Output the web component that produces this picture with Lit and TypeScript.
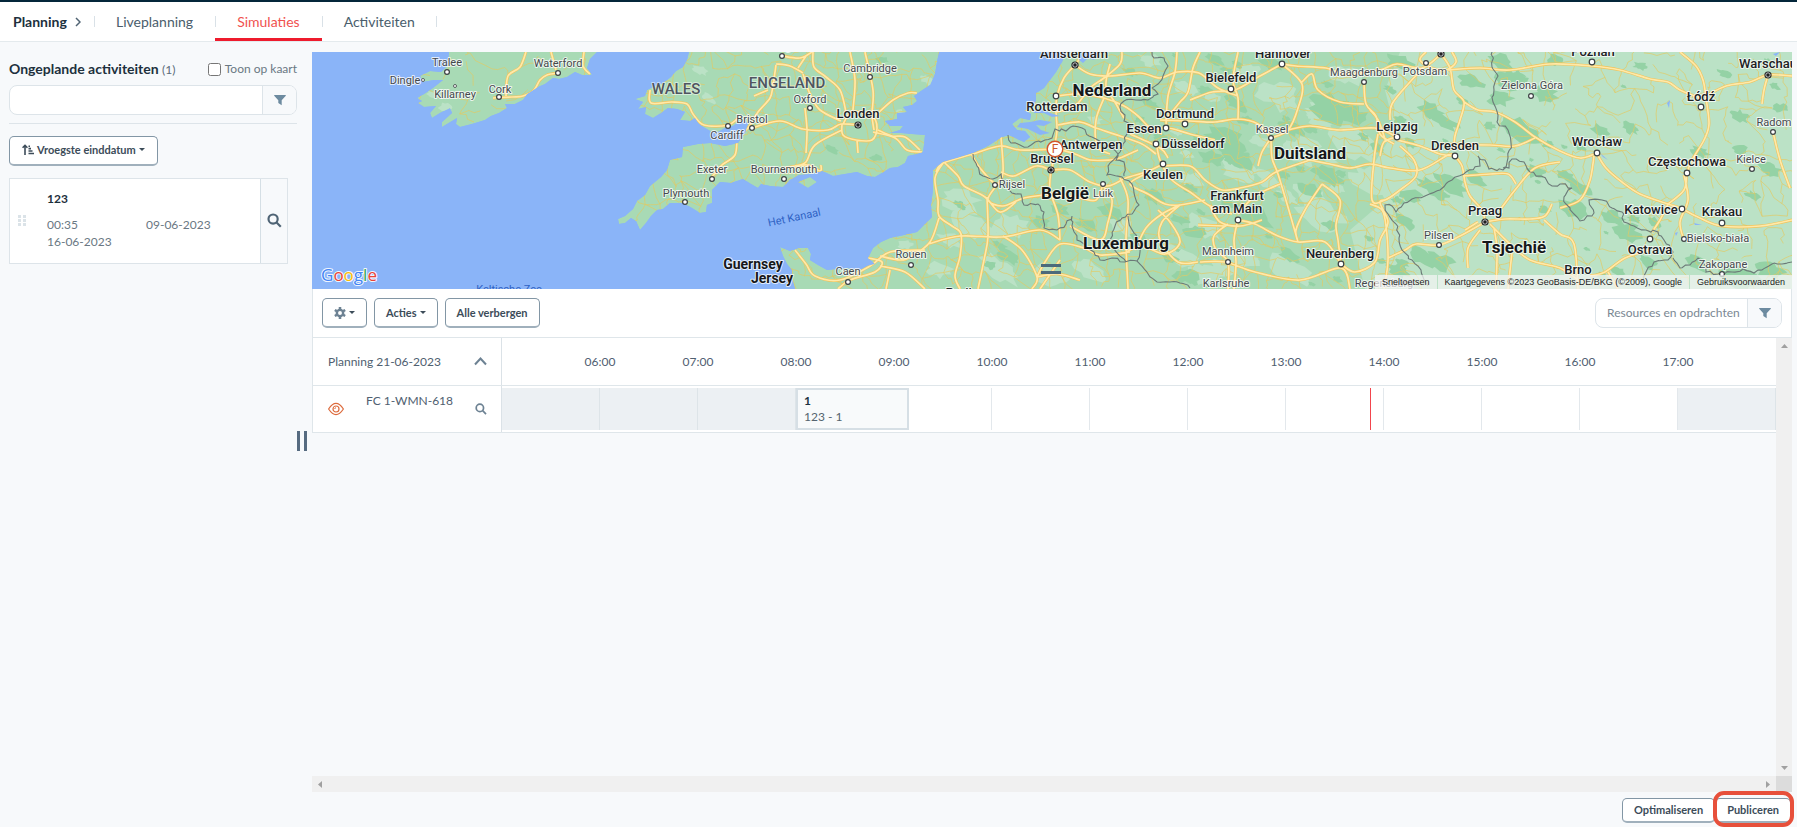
import { LitElement, html, css, svg } from "lit";
import { customElement, property } from "lit/decorators.js";

type Pt = [number, number];

/* ---------- map data ---------- */

const LAND = [
  "M449 52 448 65 441 72 430 71 420 76 423 82 434 80 443 80 433 88 424 94 417 98 422 101 418 103 424 107 436 106 430 113 432 118 440 113 450 108 452 113 442 122 442 127 452 121 457 118 456 124 460 127 472 124 485 120 491 116 499 113 507 108 505 104 515 104 523 100 527 94 538 87 545 84 553 78 559 79 567 77 575 72 582 75 592 75 587 68 590 59 597 52Z",
  "M689 52 687 60 683 67 676 71 671 77 663 83 653 87 647 90 645 96 635 99 643 102 638 109 646 107 645 114 653 118 661 113 668 108 677 109 685 112 680 120 690 121 695 118 699 124 705 128 712 132 718 132 725 128 733 126 742 120 748 123 746 131 742 137 738 143 725 146 710 143 698 144 683 147 682 157 670 160 667 170 661 177 650 186 645 195 637 201 633 209 625 216 618 219 619 224 625 223 631 218 636 221 640 230 646 223 651 216 657 210 663 209 670 203 683 203 692 208 700 213 706 212 707 205 712 203 712 190 720 182 731 183 743 179 751 184 758 188 761 184 770 186 783 187 790 180 799 175 812 174 822 171 833 176 845 174 857 172 867 176 875 177 882 173 890 168 898 167 905 163 908 156 917 154 923 152 924 145 925 135 912 134 901 133 890 133 900 130 903 126 890 126 885 121 897 119 897 113 907 112 903 107 912 105 917 101 914 96 921 91 930 85 935 74 937 62 939 52Z",
  "M798 182 810 177 817 182 808 188Z",
  "M780 247 790 251 799 248 808 248 811 254 810 260 818 265 827 270 837 269 847 268 860 270 867 266 875 264 868 258 873 248 881 242 890 238 904 235 917 232 925 224 932 217 931 205 933 190 933 170 943 162 957 158 973 153 988 146 1002 137 1009 135 1015 138 1024 142 1030 137 1025 131 1017 130 1012 124 1020 118 1030 120 1031 114 1024 110 1032 108 1036 101 1036 93 1044 88 1050 80 1056 72 1062 62 1066 52 1792 52 1792 289 795 289 792 278 792 270 787 264 783 256Z",
];

const WATER = [
  "M1081 52 1079 60 1083 63 1088 58 1094 60 1098 52Z",
  "M1017 127 1028 129 1040 135 1050 133 1041 130 1036 125 1044 126 1052 122 1040 120 1030 122 1020 123Z",
  "M1034 113 1044 113 1052 117 1060 116 1050 113 1042 109 1034 110Z",
  "M1600 153 1608 160 1603 157Z", "M1667 103 1670 100 1669 108Z", "M1773 54 1780 52 1776 56Z",
  "M1694 223 1702 225 1695 225Z", "M1675 233 1678 232 1676 236Z",
];

/* national frontiers */
const BORDERS: Pt[][] = [
  [[1152,52],[1154,58],[1164,58],[1168,66],[1163,76],[1158,84],[1152,88],[1158,94],[1148,100],[1136,100],[1124,101],[1120,107],[1125,115],[1124,121],[1130,124],[1127,134],[1123,144],[1118,154],[1110,163],[1107,175],[1122,177],[1132,184],[1134,193],[1139,205],[1132,214],[1122,218],[1115,226],[1110,240],[1118,254],[1126,262]],
  [[1008,135],[1011,143],[1020,145],[1028,147],[1035,142],[1045,140],[1052,138],[1055,129],[1066,131],[1073,126],[1082,128],[1089,136],[1096,139],[1102,146],[1112,148],[1118,154],[1116,160],[1124,162],[1124,176]],
  [[973,154],[977,166],[983,176],[993,179],[1001,174],[1005,182],[1012,193],[1021,194],[1024,205],[1038,204],[1044,212],[1044,228],[1057,230],[1066,224],[1072,216],[1072,226],[1077,240],[1084,244],[1094,252],[1100,260],[1112,258],[1125,262],[1137,261],[1145,270],[1157,282],[1170,282],[1180,283],[1190,288]],
  [[1128,216],[1131,228],[1138,240],[1140,252],[1137,261]],
  [[1492,52],[1492,67],[1498,76],[1494,90],[1493,102],[1498,115],[1497,122],[1508,130],[1511,143],[1508,158],[1503,170],[1489,169],[1485,160],[1478,156],[1480,166],[1466,172],[1452,180],[1440,190],[1425,196],[1412,199],[1404,203],[1396,212],[1392,206],[1385,205],[1388,214],[1396,224],[1399,238],[1402,250],[1412,260],[1421,270],[1428,286]],
  [[1503,168],[1509,168],[1512,159],[1524,162],[1530,172],[1541,176],[1552,186],[1560,184],[1572,188],[1564,197],[1566,204],[1574,214],[1580,221],[1594,213],[1589,200],[1602,200],[1612,208],[1622,212],[1624,222],[1634,226],[1646,230],[1658,232],[1664,240],[1673,252],[1668,260],[1654,262],[1646,272],[1640,282]],
  [[1673,258],[1680,268],[1690,265],[1698,258],[1704,264],[1706,272],[1718,274],[1732,272],[1743,269],[1754,273],[1762,270],[1772,264],[1782,264],[1792,262]],
];

/* motorways */
const ROADS: Pt[][] = [
  [[493,98],[512,97],[523,96],[534,90],[540,80],[547,75],[558,73]],
  [[506,96],[508,76],[520,67],[526,52]], [[551,52],[556,70]], [[584,52],[583,66],[590,74]],
  [[650,90],[651,103],[672,102],[687,104],[693,114],[704,125],[728,125],[740,116]],
  [[776,65],[773,85],[770,98],[758,112],[748,128],[738,136],[735,155],[722,165],[712,177]],
  [[752,128],[780,121],[803,129],[828,130],[841,124],[858,125]],
  [[842,124],[843,135],[856,140],[872,140],[877,128],[872,116],[852,112],[843,124]],
  [[803,74],[810,94],[820,110],[841,121]], [[813,52],[814,67],[826,77],[840,90],[846,112]],
  [[776,64],[790,66],[803,73]], [[782,56],[800,58],[812,52]], [[850,52],[855,80],[853,110]],
  [[865,52],[873,90],[872,115],[874,130]], [[876,115],[893,100],[908,93],[917,93]],
  [[842,130],[815,145],[806,162],[795,166]], [[805,108],[807,130],[806,153]],
  [[873,132],[895,138],[907,150],[922,152]], [[878,130],[892,136],[905,137],[920,150]], [[857,140],[858,153]],
  [[754,96],[768,90]], [[785,168],[807,165],[820,171],[821,165]], [[798,68],[806,56]],
  [[795,250],[806,264],[815,276],[840,280],[870,266],[890,252],[925,250]],
  [[868,258],[882,262],[875,272],[850,280],[838,289]], [[880,266],[905,272],[925,289]], [[890,270],[886,289]],
  [[936,172],[943,163],[973,154],[1000,146],[1020,150],[1055,149]],
  [[943,163],[935,178],[938,200],[939,216],[952,226],[961,234],[960,256],[955,276],[960,289]],
  [[939,218],[930,242],[912,256],[900,260],[880,256]], [[928,244],[960,236],[1002,237],[1040,230],[1060,240]],
  [[945,163],[958,176],[964,186],[985,197],[1000,212],[1016,202]],
  [[972,155],[980,168],[996,184],[1003,172],[1001,137]], [[1001,172],[1014,176],[1036,166],[1050,170]],
  [[987,197],[988,236],[984,260],[978,289]], [[996,186],[988,200],[1003,206],[1024,198],[1051,194]],
  [[1003,236],[1022,250],[1037,277],[1032,289]], [[1037,277],[1045,262],[1060,244],[1084,248],[1100,255],[1130,252]],
  [[1037,277],[1058,274],[1080,280]], [[1040,289],[1060,260]],
  [[1052,170],[1054,150],[1057,130],[1056,112],[1057,96],[1064,78],[1075,65]],
  [[1058,149],[1075,154],[1090,160],[1110,160],[1120,158],[1138,150]],
  [[1052,170],[1070,170],[1090,182],[1108,186],[1126,178],[1146,172],[1163,164]],
  [[1051,170],[1050,190],[1058,215],[1060,240]], [[1052,194],[1080,198],[1096,200],[1103,184]],
  [[1103,186],[1112,200],[1108,222],[1100,240],[1070,226]], [[1120,178],[1128,200],[1126,240],[1128,289]],
  [[1126,252],[1142,246],[1165,254],[1180,242],[1170,222],[1158,210]],
  [[1056,112],[1075,106],[1090,88],[1104,78],[1120,64],[1122,52]],
  [[1075,65],[1090,74],[1110,76],[1140,73],[1160,78],[1177,72],[1199,73],[1218,88],[1238,96]],
  [[1075,65],[1085,52]], [[1057,96],[1080,94],[1104,98],[1124,106],[1138,116],[1150,128],[1162,134]],
  [[1104,98],[1096,120],[1097,146],[1110,154]], [[1058,125],[1080,122],[1096,128],[1120,136],[1142,144],[1156,154]],
  [[1110,64],[1106,86],[1116,104],[1124,118]], [[1177,52],[1175,72],[1168,96],[1166,125]],
  [[1200,52],[1193,68],[1188,92],[1180,102],[1167,118]],
  [[1190,100],[1212,92],[1235,90],[1260,76],[1282,64]], [[1238,52],[1233,80],[1238,98],[1238,120]],
  [[1160,120],[1190,121],[1215,122],[1238,119],[1258,124],[1271,138]],
  [[1150,130],[1168,128],[1190,134],[1215,140]], [[1130,134],[1160,148],[1168,158]],
  [[1156,140],[1160,160],[1172,180],[1190,192],[1210,206],[1232,214]],
  [[1163,166],[1190,166],[1205,180],[1222,190],[1240,188],[1262,182],[1276,172],[1310,160]],
  [[1145,174],[1130,184],[1148,194],[1165,204],[1180,205],[1205,200]],
  [[1180,205],[1162,214],[1146,228],[1135,250]], [[1180,205],[1162,222],[1160,240],[1178,262],[1198,262]],
  [[1271,138],[1272,158],[1278,174],[1290,214],[1298,242]], [[1271,138],[1262,152],[1258,166]],
  [[1282,64],[1296,66],[1326,68],[1345,74],[1380,70],[1397,64],[1422,68],[1441,54]],
  [[1282,64],[1302,84],[1298,108],[1288,130],[1271,138]], [[1302,82],[1312,74],[1318,90],[1340,102],[1364,104]],
  [[1288,130],[1310,126],[1340,130],[1375,128],[1397,137]],
  [[1364,82],[1366,104],[1376,116],[1380,134],[1394,144]],
  [[1310,160],[1330,164],[1350,168],[1370,164],[1390,168],[1420,170],[1448,155],[1455,156]],
  [[1322,184],[1340,200],[1336,225],[1338,240],[1341,264]], [[1322,184],[1305,210],[1296,230],[1298,242]],
  [[1238,220],[1255,224],[1278,236],[1298,242],[1325,242],[1341,264]],
  [[1238,220],[1234,240],[1236,262],[1234,289]], [[1228,224],[1214,236],[1216,250],[1228,262],[1228,289]],
  [[1238,214],[1255,196],[1280,184]], [[1210,206],[1220,222],[1240,226],[1262,220]], [[1198,225],[1225,226]],
  [[1200,262],[1225,262],[1255,272],[1300,280],[1341,268],[1350,289]],
  [[1341,264],[1355,272],[1375,262],[1380,240],[1388,222],[1380,203],[1385,200]],
  [[1378,134],[1374,160],[1372,200],[1385,200],[1400,190],[1416,176],[1414,160],[1400,146]],
  [[1370,204],[1382,210],[1386,226],[1388,260],[1384,289]], [[1388,258],[1405,250],[1416,244],[1439,245],[1460,236],[1485,222]],
  [[1397,137],[1384,142],[1380,156]], [[1386,142],[1378,120],[1370,110]], [[1390,120],[1392,104],[1410,82],[1424,68]],
  [[1441,54],[1450,68],[1454,90],[1464,102],[1460,120],[1455,136],[1454,150]],
  [[1426,52],[1420,60],[1432,68],[1446,70],[1456,62],[1452,52]],
  [[1397,140],[1420,146],[1440,154],[1455,156]], [[1455,145],[1490,145],[1515,146],[1535,138]],
  [[1464,102],[1478,110],[1495,112],[1515,122],[1535,137],[1558,150],[1580,158],[1597,153]],
  [[1455,156],[1462,166],[1465,182],[1470,196],[1482,210],[1485,222]], [[1463,176],[1490,174],[1508,174],[1516,184]],
  [[1485,222],[1505,219],[1530,219],[1545,216],[1552,204]], [[1490,224],[1510,244],[1530,260],[1560,268],[1578,280]],
  [[1478,222],[1465,230]], [[1480,230],[1468,248],[1468,268]], [[1494,228],[1497,250],[1496,289]], [[1512,252],[1508,289]],
  [[1500,210],[1515,190],[1535,168],[1560,162]], [[1544,220],[1560,234],[1574,244],[1578,289]],
  [[1448,70],[1480,68],[1510,70],[1550,64],[1592,66],[1620,70],[1650,79],[1668,82],[1680,90],[1700,98]],
  [[1680,52],[1696,66],[1703,80],[1706,98],[1709,124],[1704,140],[1692,160],[1687,173],[1684,190],[1668,204]],
  [[1706,96],[1726,86],[1750,82],[1768,75],[1792,76]], [[1768,75],[1764,90],[1762,104]],
  [[1597,154],[1606,168],[1622,182],[1640,194],[1668,204],[1680,208],[1700,218],[1722,226],[1760,226],[1792,220]],
  [[1668,204],[1660,220],[1652,232]], [[1650,250],[1625,258],[1605,272],[1590,276]],
  [[1594,156],[1590,180],[1580,200],[1560,208]], [[1684,175],[1688,200],[1680,222],[1684,240]],
  [[1773,132],[1780,160],[1790,188]], [[1608,272],[1618,289]],
];

/* woodland */
const FORESTS: [number, number, number][] = [
  [1225,140,22],[1240,160,18],[1212,158,14],[1200,140,10],[1255,216,20],[1236,104,12],[1330,108,26],[1352,116,16],[1290,128,14],
  [1328,176,16],[1310,190,12],[1215,60,10],[1270,64,12],[1378,148,8],[1410,196,14],[1430,186,14],[1450,184,18],[1475,178,12],
  [1400,62,16],[1430,110,14],[1445,122,14],[1500,62,14],[1510,80,18],[1500,98,14],[1545,94,14],[1520,130,22],[1470,82,14],
  [1535,172,12],[1575,210,16],[1580,188,12],[1612,218,14],[1625,232,18],[1566,176,10],[1600,130,10],[1630,128,10],[1648,262,12],
  [1695,262,14],[1740,278,22],[1770,270,16],[1405,222,12],[1420,256,16],[1440,262,16],[1398,270,12],[1152,196,12],[1110,212,14],
  [1088,226,12],[1140,240,10],[1195,232,12],[1185,276,14],[1170,258,10],[990,265,8],[1010,258,12],[1000,246,8],[832,150,7],
  [876,158,7],[882,60,7],[960,205,7],[1780,108,8],[1770,170,14],[1740,150,10],[1400,120,8],[1205,90,8],[1130,72,8],[1060,210,10],
  [1725,74,8],[1640,66,8],[1555,60,10],[1740,116,10],[1700,152,10],[1290,256,12],[1330,225,9],[1210,120,7],[1140,120,6],[1040,222,10],
];

const FIELDS: [number, number, number][] = [
  [960,200,22],[975,225,24],[950,240,14],[1010,225,22],[1000,270,22],[940,270,14],[1050,275,18],[700,70,9],[708,98,8],[928,80,9],
  [445,107,7],[432,94,6],[1185,88,12],[1150,60,12],[1280,95,26],[1300,150,22],[1205,225,20],[1240,258,20],[1190,180,14],[1120,225,16],
  [905,245,9],[900,112,6],[1250,70,14],[1320,215,26],[1290,270,22],[1345,75,18],[1355,145,26],[1370,180,22],[1095,120,8],[1090,270,18],
];

type Label = [string, number, number, string, number?, number?, string?];
/* text, x, baseline, class, dot x, dot y, dot kind */
const LABELS: Label[] = [
  ["Tralee",447,66,"town",447,72],["Dingle",405,84,"town",423,80,"s"],["Killarney",455,98,"town",455,86,"s"],
  ["Cork",500,93,"town",499,97],["Waterford",558,67,"town",558,73],["WALES",676,94,"region"],["ENGELAND",787,88,"region"],
  ["Birmingham",783,50,"town",782,56],["Cambridge",870,72,"town",870,77],["Oxford",810,103,"town",810,108],
  ["Londen",858,118,"city",858,125,"c"],["Bristol",752,123,"town",752,128],["Cardiff",727,139,"town",728,126],
  ["Exeter",712,173,"town",712,179],["Bournemouth",784,173,"town",784,179],["Plymouth",686,197,"town",685,202],
  ["Guernsey",753,269,"isle"],["Jersey",772,283,"isle"],["Rouen",911,258,"town",911,265],["Caen",848,275,"town",848,282],
  ["Parijs",962,297,"city"],["Amsterdam",1074,58,"city",1075,65,"c"],["Rotterdam",1057,111,"city",1056,96],
  ["Nederland",1112,96,"land"],["Brussel",1052,163,"city",1051,170,"c"],["Antwerpen",1091,149,"city"],["België",1065,199,"land"],
  ["Luik",1103,197,"town",1103,184],["Rijsel",1012,188,"town",995,185],["Essen",1144,133,"city",1166,128],
  ["Dortmund",1185,118,"city",1185,124],["Düsseldorf",1193,148,"city",1156,144],["Keulen",1163,179,"city",1163,164],
  ["Bielefeld",1231,82,"city",1231,89],["Hannover",1283,58,"city",1282,64],["Kassel",1272,133,"town",1271,138],
  ["Duitsland",1310,159,"land"],["Maagdenburg",1364,76,"town",1364,82],["Frankfurt",1237,200,"city",1238,220],
  ["am Main",1237,213,"city"],["Luxemburg",1126,249,"land"],["Mannheim",1228,255,"town",1228,262],["Karlsruhe",1226,287,"town"],
  ["Neurenberg",1340,258,"city",1341,264],["Regensburg",1384,287,"town"],["Potsdam",1425,75,"town",1426,63],
  ["Berlijn",1441,48,"city",1441,54,"c"],["Poznań",1593,56,"city",1592,62],["Zielona Góra",1532,89,"town",1531,96],
  ["Łódź",1701,101,"city",1701,107],["Warschau",1768,68,"city",1768,75,"c"],["Radom",1774,126,"town",1773,132],
  ["Leipzig",1397,131,"city",1397,137],["Dresden",1455,150,"city",1455,156],["Wrocław",1597,146,"city",1597,153],
  ["Częstochowa",1687,166,"city",1687,173],["Kielce",1751,163,"town",1752,169],["Praag",1485,215,"city",1485,222,"c"],
  ["Pilsen",1439,239,"town",1439,245],["Tsjechië",1514,253,"land"],["Katowice",1651,214,"city",1682,209],
  ["Krakau",1722,216,"city",1722,223],["Ostrava",1650,254,"city",1650,239],["Bielsko-biała",1718,242,"town",1684,239],
  ["Zakopane",1723,268,"town",1722,274],["Brno",1578,274,"city"],
];

function seeded(seed: number) {
  let s = seed;
  return () => {
    s = (s * 1664525 + 1013904223) % 4294967296;
    return s / 4294967296;
  };
}

/* smooth curve through the given points */
function curve(p: Pt[]): string {
  let d = `M${p[0][0]} ${p[0][1]}`;
  for (let i = 0; i < p.length - 1; i++) {
    const a = p[i - 1] ?? p[i], b = p[i], c = p[i + 1], e = p[i + 2] ?? c;
    const n = (v: number) => v.toFixed(1);
    d += `C${n(b[0] + (c[0] - a[0]) / 6)} ${n(b[1] + (c[1] - a[1]) / 6)} ${n(c[0] - (e[0] - b[0]) / 6)} ${n(c[1] - (e[1] - b[1]) / 6)} ${c[0]} ${c[1]}`;
  }
  return d;
}

/* breaks every leg in short, slightly shaken steps */
function rough(p: Pt[], amount: number, seed: number): string {
  const r = seeded(seed);
  let d = `M${p[0][0]} ${p[0][1]}`;
  for (let i = 0; i < p.length - 1; i++) {
    const [x1, y1] = p[i], [x2, y2] = p[i + 1];
    const steps = Math.max(1, Math.round(Math.hypot(x2 - x1, y2 - y1) / 4));
    for (let k = 1; k <= steps; k++) {
      const j = k === steps ? 0 : amount;
      d += `L${(x1 + ((x2 - x1) * k) / steps + (r() - 0.5) * j).toFixed(1)} ${(y1 + ((y2 - y1) * k) / steps + (r() - 0.5) * j).toFixed(1)}`;
    }
  }
  return d;
}

function blobs(list: [number, number, number][], seed: number): string {
  const r = seeded(seed);
  return list
    .map(([x, y, s]) => {
      const n = 16, tilt = r() * 3;
      let d = "";
      for (let i = 0; i < n; i++) {
        const t = (i / n) * Math.PI * 2;
        const q = s * (0.55 + r() * 0.6);
        const px = Math.cos(t) * q, py = Math.sin(t) * q * 0.6;
        const k = Math.sin(tilt) * 0.4;
        d += `${i ? "L" : "M"}${(x + px).toFixed(1)} ${(y + py + px * k).toFixed(1)}`;
      }
      return d + "Z";
    })
    .join("");
}

function localRoads(): string {
  const r = seeded(77);
  const cell = 15, cols = 100, rows = 17;
  const grid: Pt[][] = [];
  for (let j = 0; j < rows; j++) {
    grid.push([]);
    for (let i = 0; i < cols; i++) grid[j].push([312 + i * cell + (r() - 0.5) * 13, 50 + j * cell + (r() - 0.5) * 13]);
  }
  let d = "";
  const link = (a: Pt, b: Pt) => {
    const m = (k: number): Pt => [a[0] + (b[0] - a[0]) * k + (r() - 0.5) * 5, a[1] + (b[1] - a[1]) * k + (r() - 0.5) * 5];
    const p = m(0.33), q = m(0.66);
    d += `M${a[0].toFixed(1)} ${a[1].toFixed(1)}L${p[0].toFixed(1)} ${p[1].toFixed(1)}L${q[0].toFixed(1)} ${q[1].toFixed(1)}L${b[0].toFixed(1)} ${b[1].toFixed(1)}`;
  };
  for (let j = 0; j < rows - 1; j++)
    for (let i = 0; i < cols - 1; i++) {
      const x = 312 + i * cell;
      const dense = x < 620 ? 0.2 : x < 1400 ? 0.72 : 0.42;
      if (r() < dense) link(grid[j][i], grid[j][i + 1]);
      if (r() < dense) link(grid[j][i], grid[j + 1][i]);
      if (r() < dense * 0.3) link(grid[j][i], grid[j + 1][i + 1]);
    }
  return d;
}

function scatter(count: number, x0: number, x1: number, size: number, seed: number): [number, number, number][] {
  const r = seeded(seed);
  return Array.from({ length: count }, () => [x0 + r() * (x1 - x0), 55 + r() * 230, size * (0.5 + r())]);
}

const LAND_PATH = LAND.join("");
const LOCAL = localRoads();
const MAJOR = ROADS.map(curve).join("");
const FRONTIER = BORDERS.map((b, i) => rough(b, 3, i + 5)).join("");
const WOODS = blobs([...FORESTS, ...scatter(60, 1130, 1780, 6, 11)], 3);
const PLAINS = blobs([...FIELDS, ...scatter(24, 1150, 1400, 14, 21)], 8);

/* ---------- icons ---------- */

const funnel = html`<svg class="funnel" viewBox="0 0 12 12" aria-hidden="true"><path d="M.6 1h10.8c.5 0 .7.5.4.8L7.7 6.300v4.900L4.300 9V6.300L.2 1.800C-.1 1.500.100 1 .600 1Z" /></svg>`;
const magnifier = html`<svg class="magnifier" viewBox="0 0 16 16" aria-hidden="true"><circle cx="6.500" cy="6.500" r="4.900" /><path d="M10.200 10.200 14.700 14.700" /></svg>`;

/* ---------- map ---------- */

@customElement("route-map")
export class RouteMap extends LitElement {
  static styles = css`
    :host { display: block; position: relative; height: 237px; overflow: hidden; background: #8ab4f8; }
    .canvas { display: block; width: 100%; height: 100%; }
    text { font-family: Roboto, sans-serif; text-anchor: middle; paint-order: stroke; stroke: #fff; stroke-opacity: .75; stroke-width: 2px; stroke-linejoin: round; fill: #3c4043; }
    .town { font-size: 11px; fill: #45494d; }
    .city { font-size: 13px; font-weight: 500; fill: #202124; }
    .region { font-size: 15px; font-weight: 500; fill: #4f5560; stroke-opacity: .5; }
    .isle { font-size: 14px; font-weight: 700; fill: #16181a; }
    .land { font-size: 17px; font-weight: 700; fill: #16181a; }
    .sea { font-size: 11px; fill: #2f62c4; stroke: none; }
    .pin { font-size: 12px; fill: #d0562b; stroke: none; }
    .logo { font-family: "Open Sans", sans-serif; font-size: 17px; font-weight: 500; text-anchor: start; stroke-opacity: .9; }
    .drag { position: absolute; left: 50%; bottom: 15px; width: 20px; height: 10px; margin-left: -11px; padding: 0; border: solid #4c6a7b; border-width: 3px 0; background: none; box-sizing: border-box; cursor: row-resize; }
    .legal { position: absolute; right: 0; bottom: 0; display: flex; gap: 1px; font: 9px/14px "Liberation Sans", sans-serif; }
    .legal > * { padding: 0 7px; background: rgba(245, 245, 245, .72); color: #222; text-decoration: none; white-space: nowrap; border: 0; font: inherit; }
  `;

  private label([text, x, y, kind, dx, dy, dot]: Label) {
    const mark =
      dx === undefined ? "" :
      dot === "c" ? svg`<circle cx=${dx} cy=${dy!} r="3.600" fill="#202124" /><circle cx=${dx} cy=${dy!} r="2.200" fill="none" stroke="#fff" stroke-width=".700" />` :
      svg`<circle cx=${dx} cy=${dy!} r=${dot === "s" ? 1.5 : kind === "city" ? 2.8 : 2.4} fill="#fff" stroke="#3c4043" stroke-width=${dot === "s" ? 0.8 : 1.2} />`;
    return svg`${mark}<text class=${kind} x=${x} y=${y}>${text}</text>`;
  }

  render() {
    return html`
      <svg class="canvas" viewBox="312 52 1480 237" preserveAspectRatio="xMidYMid slice" role="img" aria-label="Kaart">
        <defs><clipPath id="land"><path d=${LAND_PATH} /></clipPath></defs>
        <g clip-path="url(#land)">
          <path d=${LAND_PATH} fill="#a8dab5" />
          <path d="M1400 52 1385 90 1395 130 1370 170 1385 200 1350 230 1365 289H1792V52Z" fill="#bbe2c6" />
          <path d=${PLAINS} fill="#bbe2c6" />
          <path d=${WOODS} fill="#94d2a5" />
          <path d=${LOCAL} fill="none" stroke="#e3c962" stroke-width=".800" stroke-opacity=".850" />
          <path d=${MAJOR} fill="none" stroke="#f2c35a" stroke-width="2.800" stroke-linejoin="round" />
          <path d=${MAJOR} fill="none" stroke="#ffe9a8" stroke-width="1.700" stroke-linejoin="round" />
        </g>
        <path d=${WATER.join("")} fill="#8ab4f8" />
        <path d=${FRONTIER} fill="none" stroke="#6c7a78" stroke-width="1.100" />
        ${LABELS.map((l) => this.label(l))}
        <text class="sea" x="795" y="221" transform="rotate(-12 795 221)">Het Kanaal</text>
        <text class="sea" x="509" y="293">Keltische Zee</text>
        <circle cx="1055" cy="149" r="7.800" fill="#fff" stroke="#d0562b" stroke-width="1.400" />
        <text class="pin" x="1055" y="153">F</text>
        <text class="logo" x="321" y="281"><tspan fill="#4285f4">G</tspan><tspan fill="#ea4335">o</tspan><tspan fill="#fbbc04">o</tspan><tspan fill="#4285f4">g</tspan><tspan fill="#34a853">l</tspan><tspan fill="#ea4335">e</tspan></text>
      </svg>
      <button class="drag" aria-label="Kaarthoogte aanpassen"></button>
      <div class="legal">
        <button>Sneltoetsen</button>
        <span>Kaartgegevens ©2023 GeoBasis-DE/BKG (©2009), Google</span>
        <a href="#">Gebruiksvoorwaarden</a>
      </div>
    `;
  }
}

/* ---------- timeline ---------- */

@customElement("day-timeline")
export class DayTimeline extends LitElement {
  @property({ type: Number }) from = 5;
  @property({ type: Number }) to = 18;

  static styles = css`
    :host { display: block; color: #4f6070; font-size: 12px; }
    .row { display: grid; grid-template-columns: 189px minmax(0, 1fr); height: 47px; box-sizing: border-box; background: #fff; border: 1px solid #dfe6ea; border-top: 0; border-right: 0; }
    .head { height: 48px; }
    .name { display: flex; align-items: center; justify-content: space-between; padding: 0 14px 0 15px; border-right: 1px solid #dbe2e7; box-sizing: border-box; }
    .res { align-self: flex-start; line-height: 16px; padding-top: 7px; }
    .icon { display: flex; padding: 0; border: 0; background: none; cursor: pointer; }
    .chev { width: 13px; height: 13px; fill: none; stroke: #6d8293; stroke-width: 2; }
    .eye { width: 16px; height: 14px; fill: none; stroke: #dd6b3d; stroke-width: 1.200; }
    .magnifier { width: 12px; height: 12px; fill: none; stroke: #6d8293; stroke-width: 2.300; }
    .hours { display: flex; justify-content: center; align-items: center; }
    .hour { text-align: center; }
    .track { position: relative; display: flex; margin: 2px 0; }
    .cell { flex: 1; box-sizing: border-box; border-right: 1px solid #e3e8ec; }
    .off { background: #ecf0f3; }
    .off:not(:last-of-type) { border-right-color: #dde4e8; }
    .task { position: absolute; top: 0; bottom: 0; box-sizing: border-box; padding: 2px 6px; border: 2px solid #d6dfe5; background: #f8fafb; text-align: left; color: #55646f; font: inherit; overflow: hidden; }
    .task strong { display: block; color: #1d3342; line-height: 16px; }
    .task span { display: block; line-height: 16px; }
    .now { position: absolute; top: 0; bottom: 0; width: 1px; background: #f2454d; }
  `;

  private at(hour: number) {
    return ((hour - this.from) / (this.to - this.from)) * 100;
  }

  render() {
    const count = this.to - this.from;
    const hours = Array.from({ length: count - 1 }, (_, i) => this.from + 1 + i);
    const cells = Array.from({ length: count }, (_, i) => this.from + i);
    return html`
      <div class="row head">
        <div class="name">
          <span>Planning 21-06-2023</span>
          <button class="icon" aria-label="Inklappen"><svg class="chev" viewBox="0 0 13 13"><path d="M1 9.500 6.500 3.500 12 9.500" /></svg></button>
        </div>
        <div class="hours">
          ${hours.map((h) => html`<span class="hour" style="width:${100 / count}%">${String(h).padStart(2, "0")}:00</span>`)}
        </div>
      </div>
      <div class="row">
        <div class="name">
          <button class="icon" aria-label="Tonen op kaart"><svg class="eye" viewBox="0 0 16 14"><path d="M.6 7Q8-4.200 15.400 7 8 18.200.600 7Z" /><circle cx="8" cy="7" r="3" /><path d="M6.700 7A1.300 1.300 0 0 1 8 5.700" stroke-width=".900" /></svg></button>
          <span class="res">FC 1-WMN-618</span>
          <button class="icon" aria-label="Zoeken">${magnifier}</button>
        </div>
        <div class="track">
          ${cells.map((h) => html`<div class="cell ${h < 8 || h >= 17 ? "off" : ""}"></div>`)}
          <button class="task" style="left:${this.at(8)}%;width:${this.at(this.from + 1.15)}%"><strong>1</strong><span>123 - 1</span></button>
          <div class="now" style="left:${this.at(13.86)}%"></div>
        </div>
      </div>
    `;
  }
}

/* ---------- page ---------- */

@customElement("app-root")
export class AppRoot extends LitElement {
  static styles = css`
    :host { display: flex; flex-direction: column; height: 100vh; overflow: hidden; box-sizing: border-box; border-top: 2px solid #04263a; background: #f7f9fb; color: #46586a; font: 12px/16px Lato, "Noto Sans", sans-serif; }
    button, input { font: inherit; color: inherit; }
    button { cursor: pointer; }
    .top { display: flex; align-items: center; flex: none; height: 40px; box-sizing: border-box; padding-left: 13px; background: #fff; border-bottom: 1px solid #e4eaed; font-size: 14px; line-height: 18px; }
    .crumb { display: flex; align-items: center; gap: 8px; width: 81px; font-weight: 700; color: #20303d; text-decoration: none; box-sizing: border-box; }
    .crumb svg { width: 6px; height: 10px; fill: none; stroke: #506373; stroke-width: 1.500; }
    .tabs { display: flex; align-self: stretch; }
    .tab { position: relative; display: flex; align-items: center; justify-content: center; padding: 0 22px; color: #4a5d6c; text-decoration: none; }
    .tab::before { content: ""; position: absolute; left: 0; top: 14px; height: 11px; width: 1px; background: #d9e1e7; }
    .tab:last-child::after { content: ""; position: absolute; right: 0; top: 14px; height: 11px; width: 1px; background: #d9e1e7; }
    .on { color: #f0514f; box-shadow: inset 0 -3px #ee1b2d; }
    .body { display: flex; flex: 1; min-height: 0; padding-right: 5px; }
    .side { flex: none; width: 288px; padding: 17px 0 0 9px; }
    .title { display: flex; align-items: center; justify-content: space-between; height: 20px; }
    .title h1 { margin: 0; font-size: 14px; line-height: 20px; font-weight: 700; color: #20303d; white-space: nowrap; }
    .title small { font-size: 12px; font-weight: 400; color: #5a6b79; }
    .check { display: flex; align-items: center; gap: 4px; white-space: nowrap; color: #6a7883; }
    .check input { width: 13px; height: 13px; margin: 0; }
    .search { display: flex; height: 30px; box-sizing: border-box; border: 1px solid #dde4e9; border-radius: 8px; background: #fff; overflow: hidden; }
    .search input { flex: 1; min-width: 0; border: 0; outline: 0; padding: 0 0 0 11px; background: none; }
    .search input::placeholder { color: #7b8893; opacity: 1; }
    .search button { display: flex; align-items: center; justify-content: center; width: 34px; padding: 0; border: 0; border-left: 1px solid #dde4e9; background: #f7f9fb; }
    .side .search { margin-top: 6px; }
    .funnel { width: 12px; height: 12px; fill: #6d8ba0; }
    .rule { margin: 8px 0 12px; border: 0; border-top: 1px solid #dde4e9; }
    .btn { display: inline-flex; align-items: center; justify-content: center; gap: 3px; height: 30px; box-sizing: border-box; padding: 0 11px; border: 1px solid #8296a5; border-bottom-width: 2px; border-bottom-color: #a0b0bc; border-radius: 5px; background: #fff; font-size: 11px; font-weight: 700; color: #3c4c59; white-space: nowrap; }
    .caret { width: 0; height: 0; border: solid transparent; border-width: 3px 3px 0; border-top-color: #3c4c59; }
    .sort { padding: 0 12px 2px; }
    .sort svg { width: 12px; height: 11px; fill: none; stroke: #3c4c59; stroke-width: 1.600; }
    .gear { width: 12px; height: 12px; fill: none; stroke: #6d8293; }
    .card { display: flex; width: 279px; height: 86px; box-sizing: border-box; margin-top: 12px; border: 1px solid #dde4e9; background: #fff; }
    .grip { width: 8px; height: 11px; margin: 36px 21px 0 8px; fill: #dbe3e8; }
    .info { flex: 1; padding-top: 12px; line-height: 17px; color: #6a7883; }
    .info strong { display: block; line-height: 16px; margin-bottom: 9px; color: #1d2f3c; }
    .dates { display: grid; grid-template-columns: 99px 1fr; }
    .find { display: flex; align-items: center; justify-content: center; width: 27px; padding: 0 0 2px; border: 0; border-left: 1px solid #d5dfe5; background: #f7f9fb; }
    .magnifier { width: 15px; height: 15px; fill: none; stroke: #4f6475; stroke-width: 2.300; }
    .split { align-self: center; flex: none; width: 10px; height: 20px; margin: 12px 5px 0 0; padding: 0; box-sizing: border-box; border: solid #566b80; border-width: 0 3px; background: none; cursor: col-resize; }
    .main { display: flex; flex-direction: column; flex: 1; min-width: 0; padding-top: 10px; }
    route-map { flex: none; }
    .bar { display: flex; align-items: center; flex: none; gap: 7px; height: 49px; box-sizing: border-box; padding: 0 9px; background: #fff; border: 1px solid #dfe6ea; border-top: 0; }
    .bar .search { width: 187px; margin-left: auto; }
    .pane { display: grid; flex: 1; min-height: 0; grid-template: minmax(0, 1fr) 16px / minmax(0, 1fr) 16px; }
    .bars { display: flex; justify-content: space-between; background: #f0f0f0; }
    .vert { flex-direction: column; }
    .arrow { display: flex; align-items: center; justify-content: center; width: 16px; height: 16px; padding: 0; border: 0; background: none; }
    .arrow svg { width: 7px; height: 4px; fill: #a0a0a0; }
    .side-l svg, .side-r svg { width: 4px; height: 7px; }
    .corner { background: #dcdcdc; }
    .foot { display: flex; justify-content: flex-end; align-items: flex-start; flex: none; height: 35px; box-sizing: border-box; padding: 6px 1px 0 0; }
    .foot .btn { height: 25px; }
    .mark { position: relative; display: flex; }
    .mark::after { content: ""; position: absolute; inset: -7px -3px -4px -2px; border: 4px solid #e7503b; border-radius: 11px; pointer-events: none; }
  `;

  render() {
    return html`
      <header class="top">
        <a class="crumb" href="#">Planning <svg viewBox="0 0 6 10"><path d="M1 1 5 5 1 9" /></svg></a>
        <nav class="tabs">
          <a class="tab" href="#">Liveplanning</a>
          <a class="tab on" href="#" aria-current="page">Simulaties</a>
          <a class="tab" href="#">Activiteiten</a>
        </nav>
      </header>
      <div class="body">
        <aside class="side">
          <div class="title">
            <h1>Ongeplande activiteiten <small>(1)</small></h1>
            <label class="check"><input type="checkbox" />Toon op kaart</label>
          </div>
          <div class="search"><input type="text" aria-label="Zoek activiteiten" /><button aria-label="Filter">${funnel}</button></div>
          <hr class="rule" />
          <button class="btn sort">
            <svg viewBox="0 0 12 11"><path d="M3 11V1.500M.600 3.800 3 1.300 5.400 3.800M6.500 2.200H8M6.500 4.600H9M6.500 7H10.500M6.500 9.500H12" /></svg>
            Vroegste einddatum <i class="caret"></i>
          </button>
          <article class="card">
            <svg class="grip" viewBox="0 0 8 11"><path d="M0 0h3v3H0zM5 0h3v3H5zM0 4h3v3H0zM5 4h3v3H5zM0 8h3v3H0zM5 8h3v3H5z" /></svg>
            <div class="info">
              <strong>123</strong>
              <div class="dates"><span>00:35</span><span>09-06-2023</span><span>16-06-2023</span></div>
            </div>
            <button class="find" aria-label="Zoeken">${magnifier}</button>
          </article>
        </aside>
        <button class="split" aria-label="Breedte aanpassen"></button>
        <main class="main">
          <route-map></route-map>
          <div class="bar">
            <button class="btn" aria-label="Instellingen">
              <svg class="gear" viewBox="0 0 16 16"><circle cx="8" cy="8" r="4.200" stroke-width="3.200" /><path d="M8 0v3M8 13v3M1.100 4 3.700 5.500M12.300 10.500 14.900 12M1.100 12 3.700 10.500M12.300 5.500 14.900 4" stroke-width="3.400" /></svg>
              <i class="caret"></i>
            </button>
            <button class="btn">Acties <i class="caret"></i></button>
            <button class="btn">Alle verbergen</button>
            <div class="search"><input type="text" placeholder="Resources en opdrachten" aria-label="Resources en opdrachten" /><button aria-label="Filter">${funnel}</button></div>
          </div>
          <div class="pane">
            <day-timeline></day-timeline>
            <div class="bars vert">
              <button class="arrow" aria-label="Omhoog"><svg viewBox="0 0 7 4"><path d="M0 4 3.500 0 7 4Z" /></svg></button>
              <button class="arrow" aria-label="Omlaag"><svg viewBox="0 0 7 4"><path d="M0 0 3.500 4 7 0Z" /></svg></button>
            </div>
            <div class="bars">
              <button class="arrow side-l" aria-label="Naar links"><svg viewBox="0 0 4 7"><path d="M4 0 0 3.500 4 7Z" /></svg></button>
              <button class="arrow side-r" aria-label="Naar rechts"><svg viewBox="0 0 4 7"><path d="M0 0 4 3.500 0 7Z" /></svg></button>
            </div>
            <div class="corner"></div>
          </div>
          <footer class="foot">
            <button class="btn">Optimaliseren</button>
            <span class="mark"><button class="btn">Publiceren</button></span>
          </footer>
        </main>
      </div>
    `;
  }
}
